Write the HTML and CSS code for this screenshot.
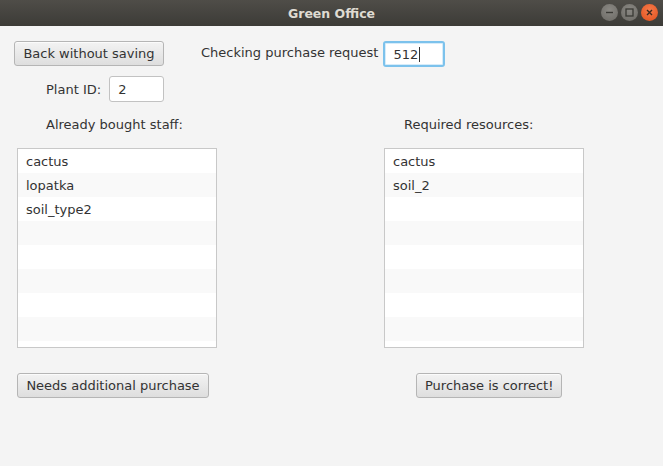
FILE: index.html
```html
<!DOCTYPE html>
<html>
<head>
<meta charset="utf-8">
<link rel="stylesheet" href="styles.css">
</head>
<body>
<div class="window">
  <div class="titlebar">
    <span class="title">Green Office</span>
    <div class="wbtns">
      <span class="wbtn"><svg width="17" height="17" viewBox="0 0 17 17"><line x1="5" y1="8.5" x2="12" y2="8.5" stroke="#3a3935" stroke-width="1.4"/></svg></span>
      <span class="wbtn"><svg width="17" height="17" viewBox="0 0 17 17"><rect x="5" y="5" width="7" height="7" fill="none" stroke="#3a3935" stroke-width="1.3"/></svg></span>
      <span class="wbtn close"><svg width="17" height="17" viewBox="0 0 17 17"><path d="M6 6 L11 11 M11 6 L6 11" stroke="#3a2a20" stroke-width="1.4"/></svg></span>
    </div>
  </div>
  <div class="content">
    <div class="row row1">
      <button class="btn back">Back without saving</button>
      <span class="lbl check">Checking purchase request</span>
      <div class="field focused">512<span class="caret"></span></div>
    </div>
    <div class="row row2">
      <span class="lbl">Plant ID:</span>
      <div class="field plant">2</div>
    </div>
    <div class="row row3">
      <span class="lbl bought">Already bought staff:</span>
      <span class="lbl required">Required resources:</span>
    </div>
    <div class="row row4">
      <div class="list left">
        <div class="item">cactus</div>
        <div class="item">lopatka</div>
        <div class="item">soil_type2</div>
        <div class="item"></div>
        <div class="item"></div>
        <div class="item"></div>
        <div class="item"></div>
        <div class="item"></div>
        <div class="item"></div>
      </div>
      <div class="list right">
        <div class="item">cactus</div>
        <div class="item">soil_2</div>
        <div class="item"></div>
        <div class="item"></div>
        <div class="item"></div>
        <div class="item"></div>
        <div class="item"></div>
        <div class="item"></div>
        <div class="item"></div>
      </div>
    </div>
    <div class="row row5">
      <button class="btn needs">Needs additional purchase</button>
      <button class="btn correct">Purchase is correct!</button>
    </div>
  </div>
</div>
</body>
</html>
```
FILE: styles.css
```css
* { box-sizing: border-box; }
html, body { margin: 0; padding: 0; }
body {
  width: 663px;
  height: 466px;
  overflow: hidden;
  background: #f4f4f4;
  font-family: "DejaVu Sans", sans-serif;
  font-size: 13px;
  color: #333333;
}
.titlebar {
  height: 26px;
  background: linear-gradient(#4f4d48, #3c3b37);
  display: flex;
  align-items: center;
  justify-content: center;
  position: relative;
}
.title {
  font-family: "DejaVu Sans", sans-serif;
  font-weight: bold;
  font-size: 12.5px;
  color: #dfdbd2;
}
.wbtns {
  position: absolute;
  right: 5px;
  top: 4px;
  display: flex;
  gap: 3px;
}
.wbtn {
  width: 17px;
  height: 17px;
  border-radius: 50%;
  background: radial-gradient(circle at 50% 35%, #8a8883, #6b6964);
  display: block;
}
.wbtn svg { display: block; }
.wbtn.close { background: radial-gradient(circle at 50% 35%, #f57a4a, #e0501c); }
.row { display: flex; align-items: center; }
.row1 { margin-top: 15px; height: 26px; padding-left: 14px; align-items: flex-start; }
.btn {
  font-family: "DejaVu Sans", sans-serif;
  font-size: 13px;
  color: #333333;
  height: 25px;
  padding: 0 8px;
  border: 1px solid #b5b5b5;
  border-radius: 3px;
  background: linear-gradient(#f3f3f3, #dedede);
  box-shadow: inset 0 1px 0 #fbfbfb;
  white-space: nowrap;
}
.back { width: 150px; }
.lbl { white-space: nowrap; }
.check { margin-left: 37px; line-height: 24px; }
.field {
  height: 26px;
  background: #ffffff;
  border: 1px solid #c2c2c2;
  border-radius: 3px;
  padding: 0 8px;
  display: flex;
  align-items: center;
}
.focused {
  margin-left: 5px;
  width: 62px;
  border: 2px solid #7cc2ec;
  padding-left: 8px;
  box-shadow: inset 0 0 0 1px #d6ecfa;
}
.caret { display: inline-block; width: 1px; height: 15px; background: #333; margin-left: 1px; }
.row2 { margin-top: 9px; height: 26px; padding-left: 46px; }
.plant { width: 55px; margin-left: 8px; }
.row3 { margin-top: 13px; height: 18px; padding-left: 46px; }
.required { margin-left: 221px; }
.row4 { margin-top: 15px; padding-left: 17px; align-items: flex-start; }
.list {
  width: 200px;
  height: 200px;
  border: 1px solid #c8c8c8;
  background: #ffffff;
  overflow: hidden;
}
.right { margin-left: 167px; }
.item {
  height: 24px;
  padding-left: 8px;
  line-height: 25px;
  background: #ffffff;
}
.item:nth-child(even) { background: #f9f9f9; }
.row5 { margin-top: 25px; padding-left: 17px; }
.needs { width: 192px; }
.correct { width: 146px; margin-left: 207px; }
```
